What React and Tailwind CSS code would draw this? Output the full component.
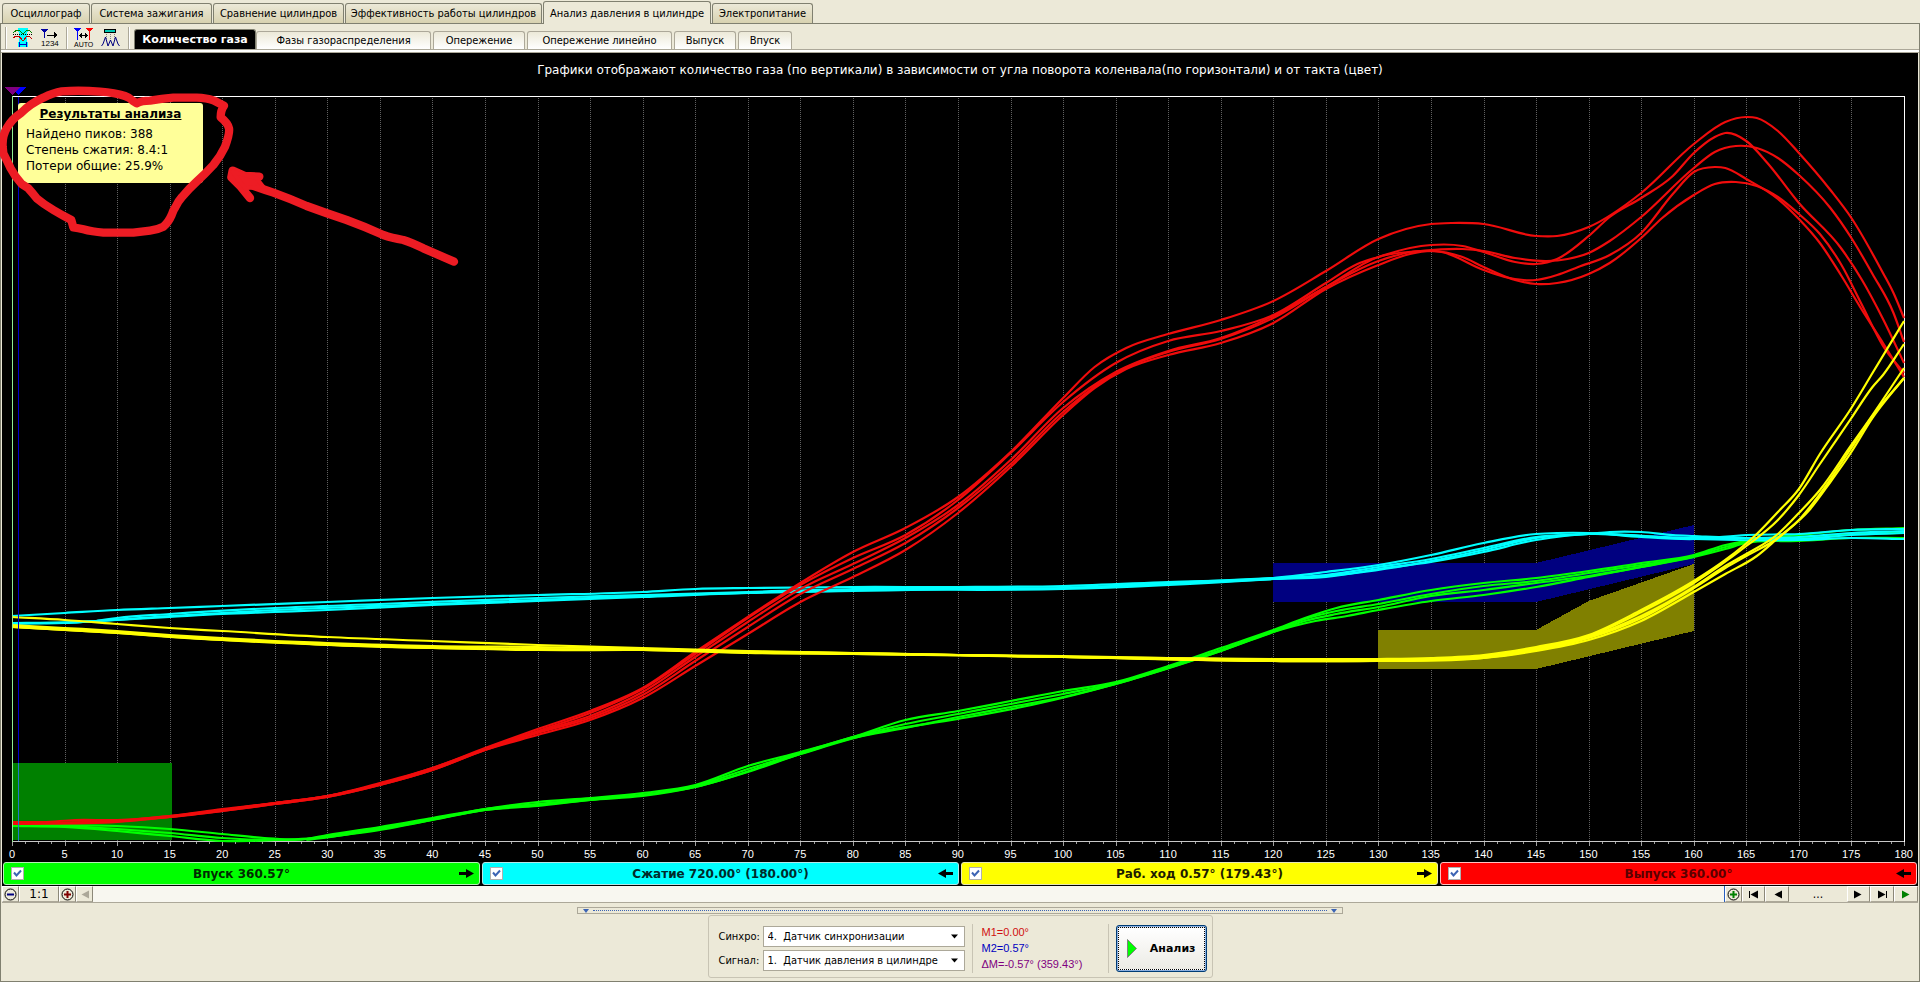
import { useState } from 'react';
import clsx from 'clsx';

const mainTabs = [
  { name: 'Осциллограф', width: 'w-[88px]' },
  { name: 'Система зажигания', width: 'w-[121px]' },
  { name: 'Сравнение цилиндров', width: 'w-[131px]' },
  { name: 'Эффективность работы цилиндров', width: 'w-[197px]' },
  { name: 'Анализ давления в цилиндре', width: 'w-[168px]' },
  { name: 'Электропитание', width: 'w-[101px]' },
];

const subTabs = [
  { name: 'Количество газа', width: 'w-[122px]' },
  { name: 'Фазы газораспределения', width: 'w-[175px]' },
  { name: 'Опережение', width: 'w-[92px]' },
  { name: 'Опережение линейно', width: 'w-[145px]' },
  { name: 'Выпуск', width: 'w-[62px]' },
  { name: 'Впуск', width: 'w-[54px]' },
];

const strokes = [
  { id: 'intake', label: 'Впуск 360.57°', color: 'bg-[#00ff00] border-[#b4f0b4] text-[#002a00]', forward: true },
  { id: 'compression', label: 'Сжатие 720.00° (180.00°)', color: 'bg-[#00ffff] border-[#b4e6e6] text-[#002a2a]', forward: false },
  { id: 'power', label: 'Раб. ход 0.57° (179.43°)', color: 'bg-[#ffff00] border-[#e6e6b4] text-[#1c1c00]', forward: true },
  { id: 'exhaust', label: 'Выпуск 360.00°', color: 'bg-[#ff0000] border-[#ffc0c0] text-[#5a0000]', forward: false },
];

// every curve is a list of [crank angle, y]
const curves = {
  intake: [
    [[0, 825], [5, 825], [10, 826], [15, 829], [20, 834], [24, 838], [28, 839], [30, 835], [35, 827], [40, 818], [45, 809], [50, 802], [55, 798], [60, 793], [65, 785], [70, 766], [75, 752], [80, 737], [85, 720], [90, 711], [95, 701], [100, 691], [105, 682], [110, 666], [115, 648], [120, 630], [123, 618], [126, 608], [130, 600], [135, 590], [140, 583], [145, 578], [150, 571], [155, 563], [160, 555], [163, 545], [165, 541], [170, 535], [175, 530], [180, 528]],
    [[0, 825], [5, 826], [10, 829], [15, 833], [20, 838], [25, 840], [28, 839], [30, 836], [35, 828], [40, 819], [45, 809], [50, 804], [55, 799], [60, 795], [65, 786], [70, 769], [75, 753], [80, 737], [85, 724], [90, 714], [95, 704], [100, 694], [105, 683], [110, 667], [115, 650], [120, 631], [123, 619], [126, 611], [130, 604], [135, 594], [140, 586], [145, 581], [150, 573], [155, 565], [160, 556], [163, 547], [165, 542], [170, 538], [175, 534], [180, 533]],
    [[0, 826], [5, 827], [10, 831], [15, 836], [20, 841], [25, 840], [30, 837], [35, 829], [40, 820], [45, 810], [50, 806], [55, 800], [60, 796], [65, 787], [70, 772], [75, 754], [80, 738], [85, 728], [90, 717], [95, 707], [100, 697], [105, 684], [110, 668], [115, 651], [120, 632], [123, 621], [126, 614], [130, 607], [135, 596], [140, 590], [145, 583], [150, 576], [155, 567], [160, 557], [163, 549], [165, 543], [170, 541], [175, 538], [180, 538]],
    [[28, 840], [35, 830], [45, 810], [55, 800], [65, 787], [75, 754], [82, 733], [90, 719], [97, 705], [105, 684], [115, 651], [120, 632], [124, 621], [127, 616], [130, 610], [135, 601], [140, 595], [145, 587], [150, 577], [155, 567], [160, 557]],
  ],
  compression: [
    [[0, 616], [5, 613], [10, 610], [15, 608], [20, 606], [30, 602], [40, 598], [50, 595], [60, 592], [65, 589], [70, 588], [80, 587], [90, 587], [100, 586], [110, 582], [120, 578], [125, 572], [130, 565], [135, 555], [140, 543], [145, 534], [147, 533], [150, 533], [155, 537], [160, 539], [165, 535], [170, 534], [175, 530], [180, 529]],
    [[0, 623], [8, 621], [10, 618], [15, 614], [25, 608], [35, 604], [50, 598], [60, 595], [70, 592], [80, 589], [90, 588], [100, 588], [110, 583], [120, 578], [125, 575], [130, 567], [135, 559], [140, 548], [145, 537], [150, 534], [152, 532], [155, 532], [158, 535], [160, 536], [165, 538], [170, 537], [175, 533], [180, 531]],
    [[0, 623], [5, 623], [8, 621], [10, 620], [15, 617], [20, 614], [25, 612], [30, 610], [40, 605], [50, 601], [60, 597], [70, 593], [80, 591], [90, 589], [100, 588], [110, 584], [120, 579], [125, 577], [130, 569], [135, 562], [140, 552], [145, 540], [150, 534], [155, 536], [160, 538], [165, 538], [170, 539], [175, 535], [180, 533]],
    [[0, 624], [8, 621], [15, 616], [25, 610], [40, 604], [60, 596], [80, 590], [100, 589], [120, 579], [127, 574], [135, 561], [140, 550], [145, 538], [150, 534], [160, 539], [170, 540], [175, 538], [180, 539]],
  ],
  exhaust: [
    [[0, 822], [3, 822], [6, 820], [10, 820], [15, 816], [20, 809], [25, 803], [30, 796], [35, 783], [40, 768], [45, 748], [50, 729], [55, 711], [60, 688], [65, 652], [70, 617], [75, 583], [80, 552], [85, 528], [90, 497], [95, 452], [100, 398], [103, 367], [106, 348], [110, 334], [115, 320], [120, 301], [125, 271], [130, 239], [135, 224], [137, 223], [140, 224], [145, 236], [147, 236], [150, 227], [155, 193], [160, 144], [163, 122], [165, 117], [166, 118], [168, 131], [170, 153], [173, 190], [175, 218], [178, 273], [179, 293], [180, 318]],
    [[0, 823], [10, 821], [15, 816], [20, 810], [25, 803], [30, 796], [35, 784], [40, 768], [45, 749], [50, 731], [55, 713], [60, 689], [65, 654], [70, 618], [75, 585], [80, 558], [85, 535], [90, 500], [95, 453], [100, 402], [105, 363], [110, 341], [115, 331], [120, 315], [125, 283], [128, 264], [130, 257], [133, 248], [135, 245], [138, 246], [140, 252], [143, 262], [145, 264], [147, 259], [150, 236], [152, 217], [155, 198], [158, 176], [160, 153], [162, 137], [163, 133], [165, 141], [167, 163], [170, 203], [174, 248], [176, 280], [178, 319], [180, 363]],
    [[0, 823], [10, 821], [15, 817], [20, 810], [25, 803], [30, 796], [35, 784], [40, 769], [45, 749], [50, 732], [55, 716], [60, 692], [65, 657], [70, 622], [75, 589], [80, 564], [85, 538], [90, 505], [95, 460], [100, 408], [105, 372], [110, 351], [115, 338], [120, 316], [125, 287], [130, 257], [134, 251], [138, 249], [140, 251], [143, 258], [146, 261], [148, 259], [150, 253], [152, 241], [155, 217], [160, 168], [162, 152], [164, 146], [166, 148], [168, 158], [170, 175], [173, 208], [175, 238], [177, 274], [179, 313], [180, 342]],
    [[0, 824], [10, 821], [15, 817], [20, 811], [25, 804], [30, 797], [35, 785], [40, 770], [45, 750], [50, 733], [55, 718], [60, 695], [65, 661], [70, 627], [75, 594], [80, 569], [85, 543], [90, 508], [95, 464], [100, 412], [105, 373], [110, 352], [115, 339], [120, 318], [125, 287], [130, 261], [134, 251], [136, 252], [140, 270], [142, 277], [145, 280], [147, 275], [149, 267], [152, 255], [155, 233], [158, 194], [160, 172], [162, 167], [163, 168], [165, 179], [168, 199], [170, 219], [172, 243], [174, 275], [176, 310], [178, 343], [180, 377]],
    [[0, 824], [10, 822], [15, 817], [20, 811], [25, 804], [30, 797], [35, 785], [40, 770], [45, 750], [50, 735], [55, 720], [60, 698], [65, 666], [70, 634], [75, 602], [80, 577], [85, 550], [90, 513], [95, 467], [100, 415], [103, 388], [106, 369], [110, 355], [115, 343], [120, 323], [125, 289], [130, 265], [133, 254], [135, 251], [138, 257], [140, 267], [143, 280], [145, 284], [147, 283], [150, 274], [152, 263], [155, 238], [157, 218], [160, 195], [162, 184], [164, 182], [166, 186], [168, 197], [170, 214], [172, 234], [174, 264], [176, 305], [178, 346], [180, 373]],
  ],
  power: [
    [[0, 617], [5, 620], [10, 624], [15, 628], [20, 631], [30, 637], [40, 641], [50, 645], [60, 648], [70, 651], [80, 653], [90, 655], [100, 656], [110, 658], [120, 659], [130, 659], [135, 658], [140, 655], [145, 647], [150, 635], [155, 610], [160, 581], [163, 560], [166, 534], [168, 512], [170, 489], [172, 454], [175, 408], [177, 373], [180, 321]],
    [[0, 625], [5, 628], [10, 631], [15, 635], [20, 638], [25, 641], [30, 643], [40, 646], [50, 647], [60, 649], [70, 652], [80, 653], [90, 655], [100, 657], [110, 658], [120, 660], [130, 660], [135, 659], [140, 656], [145, 648], [150, 636], [155, 612], [160, 583], [165, 546], [168, 520], [170, 495], [172, 464], [175, 418], [177, 387], [178, 375], [180, 344]],
    [[0, 626], [5, 629], [10, 632], [15, 636], [20, 639], [25, 642], [30, 644], [40, 647], [50, 649], [60, 650], [70, 653], [80, 654], [90, 655], [100, 657], [110, 659], [120, 660], [130, 660], [135, 660], [140, 657], [145, 649], [150, 637], [155, 616], [160, 587], [163, 566], [165, 554], [168, 534], [170, 513], [172, 490], [175, 445], [177, 415], [180, 368]],
    [[0, 627], [5, 630], [10, 633], [15, 637], [20, 640], [25, 642], [30, 645], [40, 648], [50, 650], [60, 650], [80, 654], [100, 657], [120, 661], [130, 661], [140, 658], [145, 650], [150, 638], [155, 618], [160, 588], [163, 568], [165, 556], [168, 538], [170, 520], [172, 494], [175, 448], [177, 416], [180, 378]],
    [[0, 627], [10, 633], [20, 640], [40, 648], [60, 650], [100, 657], [120, 661], [135, 660], [140, 658], [145, 651], [150, 640], [155, 621], [160, 592], [163, 574], [166, 556], [168, 538], [171, 510], [173, 482], [175, 452], [177, 418], [180, 378]],
  ],
};

const curveColors = {
  intake: '#00ff00',
  compression: '#00ffff',
  exhaust: '#f00c0c',
  power: '#ffff00',
};

const PLOT_WIDTH = 1892;
const toX = (deg) => Math.round((deg / 180) * PLOT_WIDTH * 10) / 10;

const smoothPath = (points) => {
  const p = points.map(([deg, y]) => [toX(deg), y]);
  const last = p.length - 1;
  const rise = (k) => (p[k + 1][1] - p[k][1]) / (p[k + 1][0] - p[k][0]);
  // slope at a point, weighted by the length of its two neighbour segments
  const slope = (k) => {
    if (k === 0) return rise(0);
    if (k === last) return rise(last - 1);
    const before = p[k][0] - p[k - 1][0];
    const after = p[k + 1][0] - p[k][0];
    return (rise(k - 1) * after + rise(k) * before) / (before + after);
  };
  let d = `M${p[0][0]} ${p[0][1]}`;
  for (let i = 0; i < last; i++) {
    const step = (p[i + 1][0] - p[i][0]) / 3;
    d += `C${p[i][0] + step} ${p[i][1] + step * slope(i)} ${p[i + 1][0] - step} ${p[i + 1][1] - step * slope(i + 1)} ${p[i + 1][0]} ${p[i + 1][1]}`;
  }
  return d;
};

const polygon = (points) => points.map(([deg, y]) => `${toX(deg)},${y}`).join(' ');

const degrees = Array.from({ length: 37 }, (_, i) => i * 5);
const ticks = Array.from({ length: 145 }, (_, i) => i * 1.25);

const Plot = ({ visible }) => (
  <svg
    viewBox={`0 96 ${PLOT_WIDTH} 746`}
    preserveAspectRatio="none"
    className="block w-full h-full overflow-visible"
    shapeRendering="crispEdges"
    fill="none"
  >
    {degrees.slice(1, -1).map((deg) => (
      <path key={deg} d={`M${Math.round(toX(deg)) + 0.5} 98V841`} stroke="#606060" strokeDasharray="1 1" />
    ))}
    <polygon points={polygon([[0, 763], [15.2, 763], [15.2, 840], [0, 840]])} fill="#008000" />
    <polygon points={polygon([[120, 563], [145, 563], [160, 525], [160, 564], [145, 602], [120, 602]])} fill="#000080" />
    <polygon points={polygon([[130, 630], [145, 630], [150, 601], [160, 564], [160, 631], [145, 669], [130, 669]])} fill="#808000" />

    <path d="M0 96.5H1892" stroke="#ffffff" />
    <path d="M1892.5 96V842" stroke="#ffffff" />
    <path d="M0 841.5H1892" stroke="#c8c8c8" />

    {Object.keys(curves).map((id) =>
      visible[id] && curves[id].map((points, i) => (
        <path
          key={id + i}
          d={smoothPath(points)}
          stroke={curveColors[id]}
          strokeWidth="2.2"
          shapeRendering="geometricPrecision"
        />
      ))
    )}

    <path d="M0.5 96V842" stroke="#90ee90" />
    <path d="M6.5 97V841" stroke="#0000c8" />
    <path d="M6.5 763V841" stroke="#1e78c8" />
    {ticks.map((deg) => (
      <path key={deg} d={`M${Math.round(toX(deg)) + 0.5} 842v${deg % 5 === 0 ? 4 : 2}`} stroke="#a0a0a0" />
    ))}
    <path d="M-2 87H14L6 95Z" fill="#0000ff" />
    <path d="M-8 87H8L0 95Z" fill="#800080" />
  </svg>
);

const Arrow = ({ forward }) => (
  <svg width="15" height="11" viewBox="0 0 15 11" className={forward ? '' : 'rotate-180'}>
    <path d="M0 4h7V1l8 4.5L7 10V7H0Z" fill="#000" />
  </svg>
);

const StrokeBar = ({ stroke, checked, onToggle }) => (
  <label className={clsx('flex items-center h-[23px] pl-[7px] pr-[5px] border rounded-[3px] font-bold text-xs', stroke.color)}>
    <span className="relative w-[13px] h-[13px]">
      <input
        type="checkbox"
        checked={checked}
        onChange={onToggle}
        className="block appearance-none w-[13px] h-[13px] bg-white border border-[#b0b0b0]"
      />
      {checked && (
        <svg className="absolute inset-0 pointer-events-none" width="13" height="13" viewBox="0 0 13 13">
          <path d="M3 5.5 5.5 8.5 10 3.5" fill="none" stroke="#3c64b4" strokeWidth="2" />
        </svg>
      )}
    </span>
    <span className="flex-1 text-center leading-4">{stroke.label}</span>
    <Arrow forward={stroke.forward} />
  </label>
);

const SyncRangeIcon = () => (
  <svg width="19" height="19" viewBox="0 0 19 19" fill="none" shapeRendering="crispEdges">
    <path d="M5 0h10v4h-1v10h1v5H5v-5h1V4H5Z" fill="#00ffff" />
    <path d="M0 5 4 2h2l3 3h2l3-3h2l3 3" stroke="#008000" />
    <path d="M0 6.500h19" stroke="#000" strokeDasharray="1 1" />
    <path d="M0 10 3 8h3l3 4h2l3-4h2l3 3" stroke="#c00000" />
    <path d="M6 16.500h8M6.500 14v5M13.500 14v5" stroke="#0000c0" />
  </svg>
);

const NumberingIcon = () => (
  <svg width="19" height="19" viewBox="0 0 19 19" shapeRendering="crispEdges" className="overflow-visible">
    <path d="M1 1h7L5 5v5H4V5Z" fill="#0000a0" />
    <path d="M7 6.500h7V4l3 3-3 3V7.500H7Z" fill="#000" />
    <text x="1" y="18" fontSize="8" fontFamily="Liberation Sans, sans-serif" fill="#000">1234</text>
  </svg>
);

const AutoIcon = () => (
  <svg width="19" height="19" viewBox="0 0 19 19" shapeRendering="crispEdges" className="overflow-visible">
    <path d="M0 0h7L4 4v8H3V4Z" fill="#0000ff" />
    <path d="M12 0h7l-3 4v8h-1V4Z" fill="#ff0000" />
    <path d="M6 7.500h7" stroke="#000" />
    <path d="M5 7.500 8 5v5ZM14 7.500 11 5v5Z" fill="#000" />
    <text x="0" y="19" fontSize="7" fontFamily="Liberation Sans, sans-serif" fill="#000">AUTO</text>
  </svg>
);

const PeaksIcon = () => (
  <svg width="19" height="19" viewBox="0 0 19 19" fill="none">
    <path d="M3.500 1.500h11v3h-11Z" fill="#00c8b4" stroke="#000" shapeRendering="crispEdges" />
    <path d="M5.500 6v8M9.500 6v8M13.500 6v8" stroke="#808080" strokeDasharray="1 1" />
    <path d="M0.500 18 2 16 4.500 9 7 18 9.500 12 12 18 14.500 9 17 16 18.500 18" stroke="#000080" />
  </svg>
);

const ToolButton = ({ title, children }) => (
  <button type="button" title={title} className="w-[27px] h-6 flex items-center justify-center">
    {children}
  </button>
);

const Grip = () => <div className="w-0.5 h-[22px] border-l border-[#aca899] bg-white" />;

const NavButton = ({ label, className, children }) => (
  <button
    type="button"
    aria-label={label}
    className={clsx('h-4 flex items-center justify-center bg-[#ece9d8] border-t border-l border-t-white border-l-white border-r border-b border-r-[#8c8878] border-b-[#aca899]', className)}
  >
    {children}
  </button>
);

const ZoomSign = ({ color, plus }) => (
  <svg width="13" height="13" viewBox="0 0 13 13" fill="none">
    <circle cx="6.500" cy="6.500" r="5.500" stroke="#000" />
    <path d={plus ? 'M3 6.500h7M6.500 3v7' : 'M3 6.500h7'} stroke={color} strokeWidth="2" />
  </svg>
);

const Triangle = ({ back, bar, color = '#000' }) => (
  <svg width="11" height="9" viewBox="0 0 11 9" className={back ? 'rotate-180' : ''}>
    <path d="M1 0.500 8.500 4.500 1 8.500Z" fill={color} />
    {bar && <path d="M9 1h1v7H9Z" fill={color} />}
  </svg>
);

const SensorSelect = ({ id, label, options }) => (
  <div className="flex items-center">
    <label htmlFor={id} className="w-11">{label}</label>
    <div className="relative">
      <select id={id} className="block appearance-none w-[202px] h-[21px] pl-1 pr-5 bg-white border border-[#aca899] text-[11px]">
        {options.map((option) => (
          <option key={option}>{option}</option>
        ))}
      </select>
      <svg className="absolute right-[7px] top-2 pointer-events-none" width="7" height="5" viewBox="0 0 7 5">
        <path d="M0 0.500H7L3.500 4.500Z" fill="#000" />
      </svg>
    </div>
  </div>
);

const Splitter = () => (
  <div className="w-[766px] h-[7px] px-[5px] flex items-center gap-1 border border-[#aca899]">
    <svg width="6" height="4" viewBox="0 0 6 4"><path d="M0 0H6L3 4Z" fill="#3c64b4" /></svg>
    <div className="flex-1 border-t border-dotted border-[#3c64b4]" />
    <svg width="6" height="4" viewBox="0 0 6 4"><path d="M0 0H6L3 4Z" fill="#3c64b4" /></svg>
  </div>
);

const Annotation = () => (
  <svg
    className="absolute left-0 top-0 pointer-events-none"
    width="480"
    height="280"
    viewBox="0 0 1440 840"
    fill="none"
    stroke="#ed1c24"
    strokeWidth="25"
    strokeLinecap="round"
    strokeLinejoin="round"
  >
    <path d="M8 440Q6 410 20 385 35 358 62 340 92 310 130 293 160 278 185 274 240 270 300 275 345 278 375 288 390 293 398 302L410 310Q425 302 450 302 485 296 520 293H590Q620 294 640 301L672 317Q662 330 662 352 684 370 687 385 690 400 675 440 662 468 640 495 615 522 590 545 565 568 545 592 534 604 527 620 520 630 515 645 505 668 490 680 472 689 450 692L400 698H310Q275 695 250 688 235 684 220 682L214 660Q185 645 160 630 130 612 110 595 97 578 85 565L65 552Q45 530 32 505 20 480 10 460Z" />
    <path d="M1362 785 1270 745Q1235 728 1210 720 1175 714 1150 705 1095 680 1040 660 980 640 920 618 870 596 820 578 775 563 740 550L700 525" />
    <path d="M778 530 735 528 698 512 694 532 722 560 750 594" />
    <path d="M698 515 770 535 790 560 735 565Z" fill="#ed1c24" strokeWidth="12" />
  </svg>
);

const App = () => {
  const [mainTab, setMainTab] = useState(4);
  const [subTab, setSubTab] = useState(0);
  const [visible, setVisible] = useState({
    intake: true,
    compression: true,
    exhaust: true,
    power: true,
  });

  const toggleStroke = (id) => {
    setVisible({ ...visible, [id]: !visible[id] });
  };

  return (
    <div className="relative h-screen flex flex-col overflow-hidden bg-[#ece9d8] text-black text-[11px] leading-[13px] font-['DejaVu_Sans_Condensed','DejaVu_Sans',sans-serif]">
      {/* Main tabs */}
      <div className="flex items-end h-6 pl-0.5 gap-px border-b border-[#808070]">
        {mainTabs.map((tab, i) => (
          <button
            key={tab.name}
            type="button"
            onClick={() => setMainTab(i)}
            className={clsx(
              'shrink-0 whitespace-nowrap border border-[#808070] rounded-t-[3px]',
              tab.width,
              i === mainTab
                ? 'h-[23px] -mb-px border-b-0 bg-[#ece9d8]'
                : 'h-5 border-b-0 bg-gradient-to-b from-[#ece9d8] to-[#d8d2b0]'
            )}
          >
            {tab.name}
          </button>
        ))}
      </div>

      <div className="flex-1 min-h-0 flex flex-col border-x border-b border-[#808070]">
        {/* Toolbar */}
        <div className="flex items-end h-[26px] pl-1 border-b border-[#aca899]">
          <Grip />
          <div className="flex pl-0.5 pr-[3px]">
            <ToolButton title="Диапазон"><SyncRangeIcon /></ToolButton>
            <ToolButton title="Нумерация"><NumberingIcon /></ToolButton>
          </div>
          <Grip />
          <div className="flex pl-0.5 pr-1">
            <ToolButton title="Авто"><AutoIcon /></ToolButton>
            <ToolButton title="Пики"><PeaksIcon /></ToolButton>
          </div>
          <Grip />
          <div className="flex items-end gap-0.5 pl-1">
            {subTabs.map((tab, i) => (
              <button
                key={tab.name}
                type="button"
                onClick={() => setSubTab(i)}
                className={clsx(
                  'shrink-0 whitespace-nowrap border border-b-0 rounded-t-[3px]',
                  tab.width,
                  i === subTab
                    ? "h-5 -mr-0.5 bg-black border-[#808070] text-white font-bold font-['DejaVu_Sans',sans-serif]"
                    : 'h-[18px] bg-gradient-to-b from-[#ece9d8] to-white border-[#aca899]'
                )}
              >
                {tab.name}
              </button>
            ))}
          </div>
        </div>
        <div className="h-[3px] bg-white border-b border-[#aca899]" />

        {/* Chart */}
        <div className="flex-1 min-h-0 flex flex-col mx-px bg-black font-['DejaVu_Sans',sans-serif]">
          <h1 className="h-[43px] pt-[9px] text-center text-xs leading-4 text-white">
            Графики отображают количество газа (по вертикали) в зависимости от угла поворота коленвала(по горизонтали) и от такта (цвет)
          </h1>
          <div className="relative flex-1 min-h-0 ml-2.5 mr-3.5">
            <Plot visible={visible} />
            <div className="absolute left-1.5 top-[7px] w-[185px] h-20 px-2 pt-[3px] bg-[#ffff99] rounded-[3px] text-xs leading-4">
              <div className="mb-1 text-center font-bold underline">Результаты анализа</div>
              <div>Найдено пиков: 388</div>
              <div>Степень сжатия: 8.4:1</div>
              <div>Потери общие: 25.9%</div>
            </div>
          </div>
          <div className="flex justify-between h-5 ml-2.5 mr-3.5 pt-1.5 text-white font-['Liberation_Sans',sans-serif]">
            {degrees.map((deg) => (
              <span key={deg} className="w-0 flex justify-center">{deg}</span>
            ))}
          </div>
          <div className="grid grid-cols-4 gap-0.5 px-px pb-px">
            {strokes.map((stroke) => (
              <StrokeBar
                key={stroke.id}
                stroke={stroke}
                checked={visible[stroke.id]}
                onToggle={() => toggleStroke(stroke.id)}
              />
            ))}
          </div>
        </div>

        {/* Scroll bar */}
        <div className="flex h-[17px] mx-px border-b border-[#aca899] bg-[#f8f7f0]">
          <NavButton label="Уменьшить" className="w-[17px]"><ZoomSign color="#000080" /></NavButton>
          <NavButton className="w-10 text-xs font-['DejaVu_Sans',sans-serif]">1:1</NavButton>
          <NavButton label="Увеличить" className="w-[17px]"><ZoomSign color="#800000" plus /></NavButton>
          <NavButton label="Влево" className="w-[17px]"><Triangle back color="#aca899" /></NavButton>
          <div className="flex-1 border-r border-[#2860c0]" />
          <NavButton label="Добавить метку" className="w-[17px]"><ZoomSign color="#008000" plus /></NavButton>
          <NavButton label="В начало" className="w-[23px]"><Triangle back bar /></NavButton>
          <NavButton label="Назад" className="w-6"><Triangle back /></NavButton>
          <div className="w-[58px] text-center text-xs bg-[#ece9d8]">...</div>
          <NavButton label="Вперёд" className="w-[23px]"><Triangle /></NavButton>
          <NavButton label="В конец" className="w-6"><Triangle bar /></NavButton>
          <NavButton label="Воспроизвести" className="w-6"><Triangle color="#008000" /></NavButton>
        </div>

        {/* Bottom panel */}
        <div className="flex flex-col items-center pt-1 pb-[3px]">
          <Splitter />
          <div className="flex items-center h-[63px] mt-px pt-1 pl-2.5 pr-[5px] border border-[#c8c4b4] rounded-[3px]">
            <div className="flex flex-col gap-[3px]">
              <SensorSelect
                id="sync"
                label="Синхро:"
                options={['4.\u00a0 Датчик синхронизации', '1.\u00a0 Датчик давления в цилиндре']}
              />
              <SensorSelect
                id="signal"
                label="Сигнал:"
                options={['1.\u00a0 Датчик давления в цилиндре', '4.\u00a0 Датчик синхронизации']}
              />
            </div>
            <div className="w-[137px] h-[49px] ml-[7px] pl-[9px] border-x border-[#c8c4b4] leading-4 font-['Liberation_Sans',sans-serif]">
              <div className="text-[#d01010]">M1=0.00°</div>
              <div className="text-[#0000c0]">M2=0.57°</div>
              <div className="text-[#800080]">ΔM=-0.57° (359.43°)</div>
            </div>
            <button
              type="button"
              className="w-[91px] h-[47px] ml-[7px] p-px border border-[#003c74] rounded-[3px] bg-[#8cb0e0] font-bold font-['DejaVu_Sans',sans-serif]"
            >
              <span className="flex items-center h-full pl-2 pr-2 justify-between border border-dotted border-black bg-gradient-to-b from-white to-[#ecebe5]">
                <svg width="10" height="19" viewBox="0 0 10 19">
                  <path d="M0.500 0.500 9.500 9.500 0.500 18.500Z" fill="#00ff00" stroke="#808080" />
                </svg>
                Анализ
              </span>
            </button>
          </div>
        </div>
      </div>

      <Annotation />
    </div>
  );
};

export default App;
